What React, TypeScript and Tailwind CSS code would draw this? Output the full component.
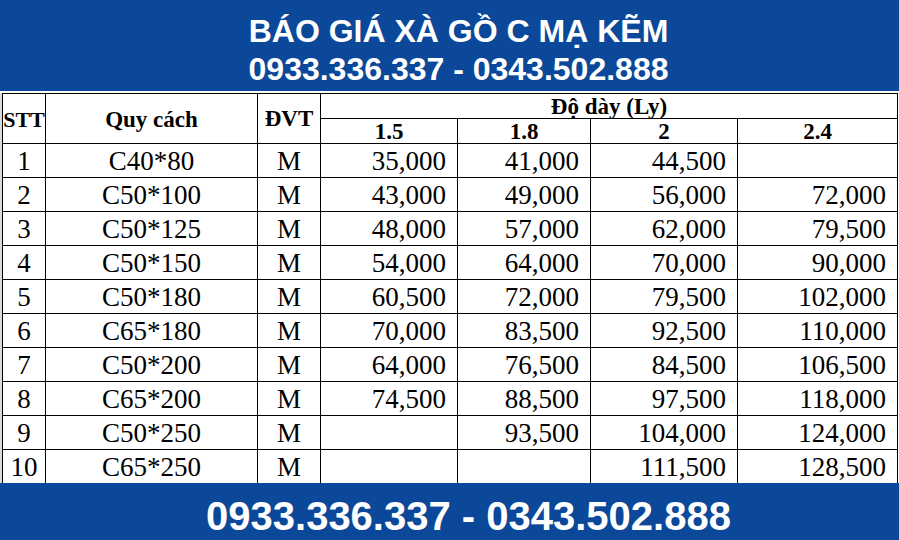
const rows: [string, string, string, string, string, string][] = [
  ['1', 'C40*80', '35,000', '41,000', '44,500', ''],
  ['2', 'C50*100', '43,000', '49,000', '56,000', '72,000'],
  ['3', 'C50*125', '48,000', '57,000', '62,000', '79,500'],
  ['4', 'C50*150', '54,000', '64,000', '70,000', '90,000'],
  ['5', 'C50*180', '60,500', '72,000', '79,500', '102,000'],
  ['6', 'C65*180', '70,000', '83,500', '92,500', '110,000'],
  ['7', 'C50*200', '64,000', '76,500', '84,500', '106,500'],
  ['8', 'C65*200', '74,500', '88,500', '97,500', '118,000'],
  ['9', 'C50*250', '', '93,500', '104,000', '124,000'],
  ['10', 'C65*250', '', '', '111,500', '128,500'],
];

const phones = '0933.336.337 - 0343.502.888';

function App() {
  return (
    <div className="w-[899px] h-[540px] flex flex-col bg-white overflow-hidden">
      {/* Title band */}
      <div className="h-[91px] bg-[#0b4899] pt-[12px] pl-[18px] text-white text-center font-bold font-[family-name:Liberation_Sans,Arial,sans-serif]">
        <div className="text-[32px] leading-[38px]">BÁO GIÁ XÀ GỒ C MẠ KẼM</div>
        <div className="text-[32px] leading-[38px]">{phones}</div>
      </div>
      <div className="h-[2px] bg-white" />

      {/* Price table */}
      <div className="flex h-[390px]">
        <div className="w-[2px] bg-[#d9d9d9]" />
        <table className="table-fixed border-collapse text-black font-[family-name:Liberation_Serif,Times_New_Roman,serif]">
          <colgroup>
            <col className="w-[43px]" />
            <col className="w-[212px]" />
            <col className="w-[63px]" />
            <col className="w-[137px]" />
            <col className="w-[133px]" />
            <col className="w-[147px]" />
            <col className="w-[160px]" />
          </colgroup>
          <thead className="font-bold">
            <tr className="h-[25px]">
              <th rowSpan={2} className="border border-black text-[22px] leading-[26px] p-0 pt-[2px]">STT</th>
              <th rowSpan={2} className="border border-black text-[23px] leading-[26px] p-0 pt-[2px]">Quy cách</th>
              <th rowSpan={2} className="border border-black text-[23px] leading-[26px] p-0">ĐVT</th>
              <th colSpan={4} className="border border-black text-[23px] leading-[22px] p-0 align-bottom">
                Độ dày (Ly)
              </th>
            </tr>
            <tr className="h-[25px]">
              {['1.5', '1.8', '2', '2.4'].map((t) => (
                <th key={t} className="border border-black text-[23px] leading-[22px] p-0 align-bottom">
                  {t}
                </th>
              ))}
            </tr>
          </thead>
          <tbody className="text-[27px] leading-[28px]">
            {rows.map((r) => (
              <tr key={r[0]} className="h-[34px]">
                <td className="border border-black text-center p-0 pt-[1px]">{r[0]}</td>
                <td className="border border-black text-center p-0 pt-[1px]">{r[1]}</td>
                <td className="border border-black text-center p-0 pt-[1px]">M</td>
                {r.slice(2).map((v, i) => (
                  <td key={i} className="border border-black text-right p-0 pt-[1px] pr-[11px]">
                    {v}
                  </td>
                ))}
              </tr>
            ))}
          </tbody>
        </table>
      </div>

      {/* Footer band */}
      <div className="flex-1 bg-[#0b4899] pt-[14px] pl-[38px] text-white text-center font-bold font-[family-name:Liberation_Sans,Arial,sans-serif] text-[40px] leading-[38px]">
        {phones}
      </div>
    </div>
  );
}

export default App;
